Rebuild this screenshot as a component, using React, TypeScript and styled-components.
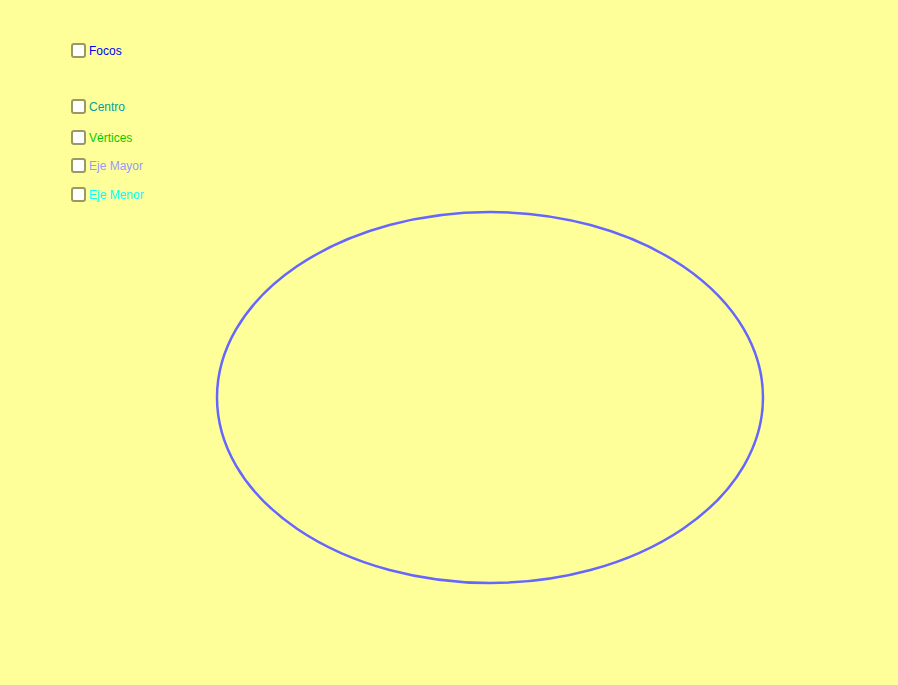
import * as React from 'react';
import styled, { createGlobalStyle } from 'styled-components';

interface toggleInterface {
  label: string;
  color: string;
  gap: number;
}

const toggles: toggleInterface[] = [
  { label: 'Focos', color: '#0000ff', gap: 0 },
  { label: 'Centro', color: '#00a0a0', gap: 41 },
  { label: 'Vértices', color: '#00cc00', gap: 16 },
  { label: 'Eje Mayor', color: '#9999ff', gap: 13 },
  { label: 'Eje Menor', color: '#00ffff', gap: 14 },
];

const GlobalStyle = createGlobalStyle`
  html, body {
    margin: 0;
    padding: 0;
    background: #ffff99;
  }
`;

const Toggle = ({ label, color, gap }: toggleInterface) => {
  const [checked, setChecked] = React.useState(false);

  return (
    <ToggleRow $gap={gap} onClick={() => setChecked(!checked)}>
      <Box>{checked ? '✓' : ''}</Box>
      <Label $color={color}>{label}</Label>
    </ToggleRow>
  );
};

export default function App() {
  return (
    <Stage>
      <GlobalStyle />
      <Curve viewBox="0 0 898 685" width="898" height="685">
        <ellipse
          cx="490"
          cy="397.5"
          rx="273"
          ry="185.5"
          fill="none"
          stroke="#6666ff"
          strokeWidth="2.5"
        />
      </Curve>
      <ToggleList>
        {toggles.map((t) => (
          <Toggle key={t.label} {...t} />
        ))}
      </ToggleList>
    </Stage>
  );
}

const Stage = styled.div`
  position: relative;
  width: 898px;
  height: 685px;
  background: #ffff99;
  overflow: hidden;
  font-family: 'Liberation Sans', Arial, sans-serif;
`;

const Curve = styled.svg`
  position: absolute;
  left: 0;
  top: 0;
`;

const ToggleList = styled.div`
  position: relative;
  display: flex;
  flex-direction: column;
  padding: 43px 0 0 71px;
`;

const ToggleRow = styled.div<{ $gap: number }>`
  display: flex;
  align-items: center;
  gap: 3px;
  height: 15px;
  margin-top: ${(p) => p.$gap}px;
  cursor: pointer;
  user-select: none;
`;

const Box = styled.div`
  box-sizing: border-box;
  width: 15px;
  height: 15px;
  border: 2px solid #999966;
  border-radius: 3px;
  background: #ffffff;
  font-size: 10px;
  line-height: 11px;
  text-align: center;
  color: #333333;
`;

const Label = styled.span<{ $color: string }>`
  font-size: 12px;
  line-height: 14px;
  color: ${(p) => p.$color};
`;
